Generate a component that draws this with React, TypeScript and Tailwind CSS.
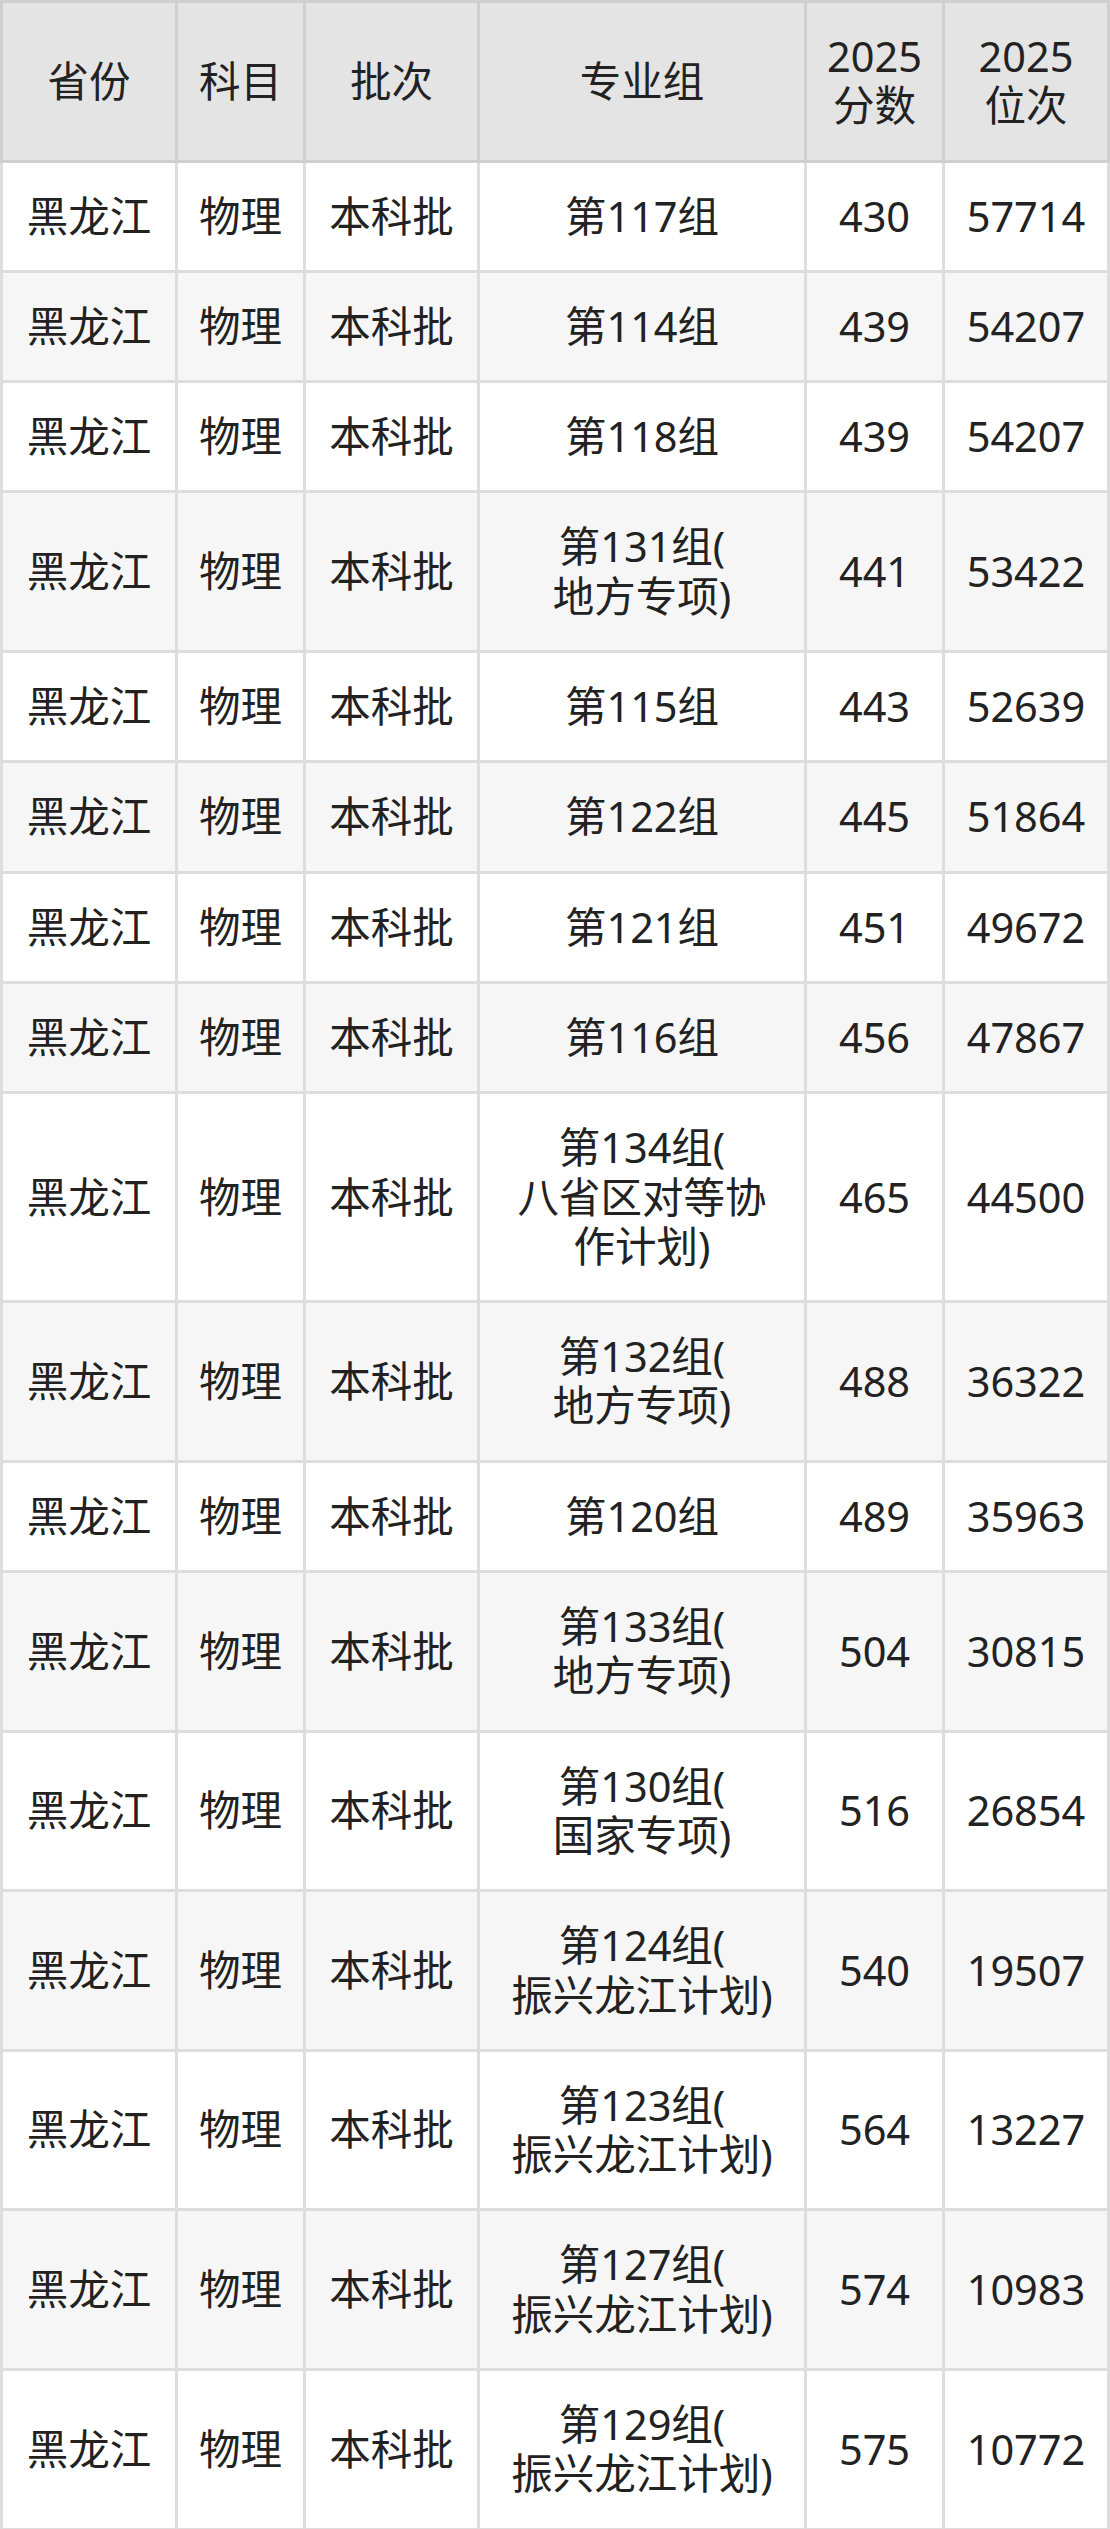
import React from "react";

type Row = { g: string[]; s: string; r: string };

const rows: Row[] = [
  { g: ["第117组"], s: "430", r: "57714" },
  { g: ["第114组"], s: "439", r: "54207" },
  { g: ["第118组"], s: "439", r: "54207" },
  { g: ["第131组(", "地方专项)"], s: "441", r: "53422" },
  { g: ["第115组"], s: "443", r: "52639" },
  { g: ["第122组"], s: "445", r: "51864" },
  { g: ["第121组"], s: "451", r: "49672" },
  { g: ["第116组"], s: "456", r: "47867" },
  { g: ["第134组(", "八省区对等协", "作计划)"], s: "465", r: "44500" },
  { g: ["第132组(", "地方专项)"], s: "488", r: "36322" },
  { g: ["第120组"], s: "489", r: "35963" },
  { g: ["第133组(", "地方专项)"], s: "504", r: "30815" },
  { g: ["第130组(", "国家专项)"], s: "516", r: "26854" },
  { g: ["第124组(", "振兴龙江计划)"], s: "540", r: "19507" },
  { g: ["第123组(", "振兴龙江计划)"], s: "564", r: "13227" },
  { g: ["第127组(", "振兴龙江计划)"], s: "574", r: "10983" },
  { g: ["第129组(", "振兴龙江计划)"], s: "575", r: "10772" },
];

const gridCols = "grid grid-cols-[178px_128px_174px_327px_138px_165px]";

function Cell({
  lines,
  first,
  header,
}: {
  lines: string[];
  first?: boolean;
  header?: boolean;
}) {
  return (
    <div
      className={
        "flex flex-col items-center justify-center text-center whitespace-nowrap py-[29px] border-b-[3px] border-r-[3px] " +
        (header ? "border-[#cfcfcf] border-t-[3px] " : "border-[#dddddd] ") +
        (first ? "border-l-[3px]" : "")
      }
    >
      {lines.map((l, i) => (
        <span key={i} className="block">
          {l}
        </span>
      ))}
    </div>
  );
}

export default function App() {
  return (
    <div className="w-[1110px] bg-white text-[#222222] text-[41.5px] leading-[49.3px] font-['Noto_Sans','Noto_Sans_CJK_SC',sans-serif]">
      <div className={gridCols + " bg-[#e4e4e4]"}>
        <Cell lines={["省份"]} first header />
        <Cell lines={["科目"]} header />
        <Cell lines={["批次"]} header />
        <Cell lines={["专业组"]} header />
        <Cell lines={["2025", "分数"]} header />
        <Cell lines={["2025", "位次"]} header />
      </div>
      {rows.map((row, i) => (
        <div
          key={i}
          className={gridCols + (i % 2 === 1 ? " bg-[#f6f6f6]" : " bg-white")}
        >
          <Cell lines={["黑龙江"]} first />
          <Cell lines={["物理"]} />
          <Cell lines={["本科批"]} />
          <Cell lines={row.g} />
          <Cell lines={[row.s]} />
          <Cell lines={[row.r]} />
        </div>
      ))}
    </div>
  );
}
